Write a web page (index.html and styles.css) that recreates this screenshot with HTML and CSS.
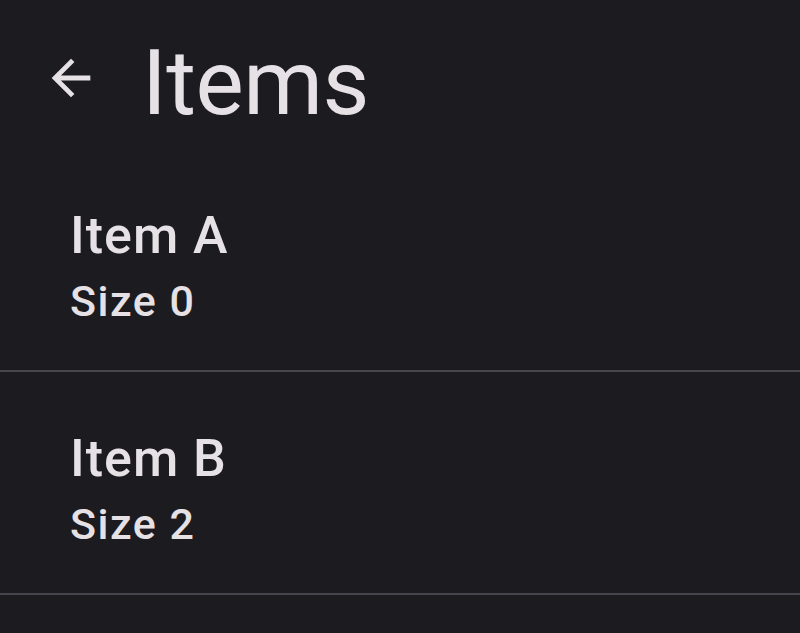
FILE: index.html
```html
<!DOCTYPE html>
<html lang="en">
<head>
    <meta charset="UTF-8">
    <meta name="viewport" content="width=device-width, initial-scale=1.0">
    <title>Items</title>
    <link rel="stylesheet" href="styles.css">
</head>
<body>
    <div class="screen">
        <div class="top-bar">
            <div class="back-button">
                <svg viewBox="0 0 24 24" width="58" height="58">
                    <path d="M20 11H7.83l5.59-5.59L12 4l-8 8 8 8 1.41-1.41L7.83 13H20v-2z"/>
                </svg>
            </div>
            <h1 class="title">Items</h1>
        </div>
        <div class="list">
            <div class="list-item">
                <div class="headline">Item A</div>
                <div class="supporting">Size 0</div>
            </div>
            <div class="list-item">
                <div class="headline">Item B</div>
                <div class="supporting">Size 2</div>
            </div>
        </div>
    </div>
</body>
</html>
```

FILE: styles.css
```css
html, body {
    margin: 0;
    padding: 0;
    background-color: #1c1b1f;
}
body {
    font-family: Roboto, "Liberation Sans", sans-serif;
    color: #e6e1e5;
}
.screen {
    width: 800px;
    height: 633px;
    overflow: hidden;
}
.top-bar {
    display: flex;
    align-items: flex-start;
    height: 149px;
    box-sizing: border-box;
    padding: 37px 0 0 42px;
}
.back-button {
    margin-top: 12px;
    width: 58px;
    height: 58px;
}
.back-button svg {
    display: block;
    fill: #e6e1e5;
}
.title {
    margin: 0 0 0 42px;
    font-size: 91px;
    font-weight: 400;
    line-height: 92px;
    letter-spacing: -0.5px;
}
.list-item {
    padding: 55px 0 36px 70px;
    border-bottom: 2px solid #49454f;
}
.headline {
    font-size: 52px;
    font-weight: 500;
    line-height: 64px;
    letter-spacing: 1px;
}
.supporting {
    font-size: 43px;
    font-weight: 500;
    line-height: 66px;
    letter-spacing: 1.5px;
}
```
